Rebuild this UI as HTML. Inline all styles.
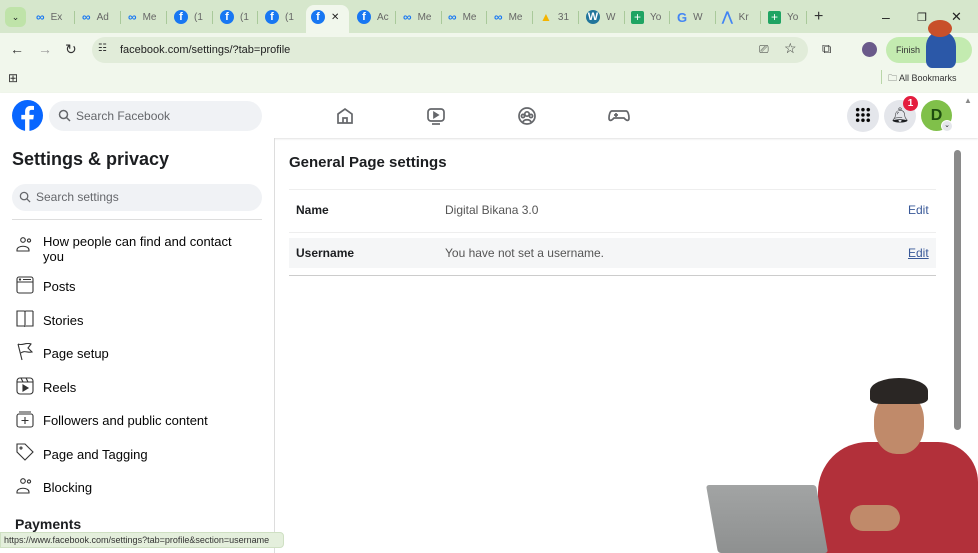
<!DOCTYPE html>
<html><head><meta charset="utf-8"><style>
*{box-sizing:border-box;margin:0;padding:0}
body{width:978px;height:553px;overflow:hidden;position:relative;background:#fff;font-family:"Liberation Sans",sans-serif;color:#1c1e21}
.abs{position:absolute}
.tabs{left:0;top:0;width:978px;height:33px;background:#d6e7cc}
.tab{position:absolute;top:9px;height:16px;font-size:10px;color:#666;display:flex;align-items:center;gap:6px}
.sep{position:absolute;top:11px;width:1px;height:13px;background:#a9c99a}
.ic{width:14px;height:14px;border-radius:50%;background:#1877f2;color:#fff;font-weight:bold;font-size:11px;text-align:center;line-height:15px}
.meta{color:#1877f2;font-weight:bold;font-size:12px}
.toolbar{left:0;top:33px;width:978px;height:60px;background:#f1f7ec}
.url{left:92px;top:37px;width:716px;height:26px;border-radius:13px;background:#e1ecd9;font-size:11px;color:#222;padding-left:28px;line-height:26px}
.fbh{left:0;top:93px;width:978px;height:45px;background:#fff;box-shadow:0 1px 2px rgba(0,0,0,.12)}
.side{left:0;top:138px;width:275px;height:415px;border-right:1px solid #ddd;background:#fff}
.item{position:absolute;left:43px;font-size:13px;color:#050505}
.sic{position:absolute;left:16px;width:18px;height:18px}
</style></head><body>
<div class="abs tabs">
 <div class="abs" style="left:5px;top:7px;width:21px;height:20px;border-radius:6px;background:#bfe3a9;font-size:9px;text-align:center;line-height:20px">&#8964;</div>
 <div class="abs" style="left:306px;top:5px;width:43px;height:28px;background:#f1f7ec;border-radius:8px 8px 0 0"></div>
 <div class="tab" style="left:36px"><span class="meta">∞</span>Ex</div><div class="sep" style="left:74px"></div>
 <div class="tab" style="left:82px"><span class="meta">∞</span>Ad</div><div class="sep" style="left:120px"></div>
 <div class="tab" style="left:128px"><span class="meta">∞</span>Me</div><div class="sep" style="left:166px"></div>
 <div class="tab" style="left:174px"><span class="ic">f</span>(1</div><div class="sep" style="left:212px"></div>
 <div class="tab" style="left:220px"><span class="ic">f</span>(1</div><div class="sep" style="left:257px"></div>
 <div class="tab" style="left:265px"><span class="ic">f</span>(1</div>
 <div class="tab" style="left:311px;color:#222"><span class="ic">f</span>✕</div>
 <div class="tab" style="left:357px"><span class="ic">f</span>Ac</div><div class="sep" style="left:395px"></div>
 <div class="tab" style="left:403px"><span class="meta">∞</span>Me</div><div class="sep" style="left:441px"></div>
 <div class="tab" style="left:448px"><span class="meta">∞</span>Me</div><div class="sep" style="left:486px"></div>
 <div class="tab" style="left:494px"><span class="meta">∞</span>Me</div><div class="sep" style="left:532px"></div>
 <div class="tab" style="left:540px"><span style="color:#f4b400;font-size:12px">▲</span>31</div><div class="sep" style="left:578px"></div>
 <div class="tab" style="left:586px"><span class="ic" style="background:#21759b">W</span>W</div><div class="sep" style="left:624px"></div>
 <div class="tab" style="left:631px"><span style="width:13px;height:13px;background:#1fa463;border-radius:2px;color:#fff;font-size:12px;line-height:12px;text-align:center">+</span>Yo</div><div class="sep" style="left:669px"></div>
 <div class="tab" style="left:677px"><span style="color:#4285f4;font-weight:bold;font-size:13px">G</span>W</div><div class="sep" style="left:715px"></div>
 <div class="tab" style="left:722px"><span style="color:#4285f4;font-weight:bold;font-size:13px">⋀</span>Kr</div><div class="sep" style="left:760px"></div>
 <div class="tab" style="left:768px"><span style="width:13px;height:13px;background:#1fa463;border-radius:2px;color:#fff;font-size:12px;line-height:12px;text-align:center">+</span>Yo</div><div class="sep" style="left:806px"></div>
 <div class="tab" style="left:814px;font-size:16px;color:#333">+</div>
 <div class="tab" style="left:882px;font-size:14px;color:#222">–</div>
 <div class="tab" style="left:917px;font-size:11px;color:#222">❐</div>
 <div class="tab" style="left:951px;font-size:13px;color:#222">✕</div>
</div>
<div class="abs toolbar"></div>
<div class="abs" style="left:10px;top:41px;font-size:14px;color:#333">←</div>
<div class="abs" style="left:38px;top:41px;font-size:14px;color:#999">→</div>
<div class="abs" style="left:65px;top:41px;font-size:14px;color:#333">↻</div>
<div class="abs url">facebook.com/settings/?tab=profile</div>
<div class="abs" style="left:98px;top:43px;font-size:10px;color:#333">☷</div>
<div class="abs" style="left:759px;top:42px;font-size:12px;color:#333">⎚</div>
<div class="abs" style="left:784px;top:40px;font-size:14px;color:#333">☆</div>
<div class="abs" style="left:822px;top:41px;font-size:13px;color:#333">⧉</div>
<div class="abs" style="left:862px;top:42px;width:15px;height:15px;border-radius:50%;background:#6a5a8a"></div>
<div class="abs" style="left:886px;top:37px;width:86px;height:26px;border-radius:13px;background:#c3ebb0;font-size:9px;line-height:26px;padding-left:10px;color:#333">Finish</div>
<div class="abs" style="left:926px;top:32px;width:30px;height:36px;border-radius:40% 40% 20% 20%;background:#2b58a8"></div>
<div class="abs" style="left:928px;top:20px;width:24px;height:17px;border-radius:50%;background:#c8502a"></div>
<div class="abs" style="left:8px;top:71px;font-size:12px;color:#333">⊞</div>
<div class="abs" style="left:881px;top:70px;width:1px;height:14px;background:#b9d6a8"></div>
<div class="abs" style="left:888px;top:71px;font-size:9px;color:#333">🗀 All Bookmarks</div>

<div class="abs fbh"></div>
<svg class="abs" style="left:12px;top:100px" width="31" height="31" viewBox="0 0 32 32"><circle cx="16" cy="16" r="16" fill="#0866ff"/><path d="M18 32V20h4l.6-4.6H18v-3c0-1.3.4-2.2 2.3-2.2h2.4V6.2c-.4-.1-1.8-.2-3.5-.2-3.4 0-5.7 2.1-5.7 5.9v3.5h-3.9V20h3.9v12z" fill="#fff"/></svg>
<div class="abs" style="left:49px;top:101px;width:213px;height:30px;border-radius:15px;background:#f0f2f5;font-size:12px;color:#65676b;line-height:30px;padding-left:27px">Search Facebook</div>
<svg class="abs" style="left:58px;top:109px" width="13" height="13" viewBox="0 0 13 13"><circle cx="5.5" cy="5.5" r="4" fill="none" stroke="#65676b" stroke-width="1.5"/><path d="M8.5 8.5l3.5 3.5" stroke="#65676b" stroke-width="1.5"/></svg>
<svg class="abs" style="left:335px;top:106px" width="20" height="20" viewBox="0 0 20 20" fill="none" stroke="#65676b" stroke-width="1.7"><path d="M3 8l7-5 7 5v9H3z"/><path d="M8 17v-5h4v5"/></svg>
<svg class="abs" style="left:426px;top:106px" width="20" height="20" viewBox="0 0 20 20" fill="none" stroke="#65676b" stroke-width="1.7"><rect x="2" y="3" width="16" height="12" rx="3"/><path d="M8 6.5v5l4-2.5z" fill="#65676b"/><path d="M6 18h8"/></svg>
<svg class="abs" style="left:517px;top:106px" width="20" height="20" viewBox="0 0 20 20" fill="none" stroke="#65676b" stroke-width="1.7"><circle cx="10" cy="10" r="8"/><circle cx="10" cy="8" r="2.2"/><circle cx="6" cy="10" r="1.6"/><circle cx="14" cy="10" r="1.6"/><path d="M6 16c1-3 7-3 8 0"/></svg>
<svg class="abs" style="left:608px;top:106px" width="22" height="20" viewBox="0 0 22 20" fill="none" stroke="#65676b" stroke-width="1.7"><path d="M4 5h14c2 0 3 4 3 7s-2 3-4 1l-1-1H6l-1 1c-2 2-4 2-4-1s1-7 3-7z"/><path d="M6 9h4M8 7v4"/></svg>
<div class="abs" style="left:847px;top:100px;width:32px;height:32px;border-radius:50%;background:#e4e6eb"></div>
<div class="abs" style="left:855px;top:107px;width:16px;height:16px;background:radial-gradient(circle,#050505 1.6px,transparent 2px) 0 0/5.3px 5.3px"></div>
<div class="abs" style="left:884px;top:100px;width:32px;height:32px;border-radius:50%;background:#e4e6eb;text-align:center;line-height:32px;font-size:15px">🔔︎</div>
<div class="abs" style="left:903px;top:96px;width:15px;height:15px;border-radius:50%;background:#e41e3f;color:#fff;font-size:10px;text-align:center;line-height:15px;font-weight:bold">1</div>
<div class="abs" style="left:921px;top:100px;width:31px;height:31px;border-radius:50%;background:#80c04a;color:#1e4d10;font-weight:bold;font-size:16px;text-align:center;line-height:31px">D</div>
<div class="abs" style="left:941px;top:120px;width:12px;height:12px;border-radius:50%;background:#e4e6eb;border:1px solid #fff;font-size:7px;text-align:center;line-height:10px">⌄</div>

<div class="abs side">
 <div class="abs" style="left:12px;top:11px;font-size:18px;font-weight:bold">Settings &amp; privacy</div>
 <div class="abs" style="left:12px;top:46px;width:250px;height:27px;border-radius:14px;background:#f0f2f5;font-size:12px;color:#65676b;line-height:27px;padding-left:24px">Search settings</div>
 <svg class="abs" style="left:19px;top:53px" width="12" height="12" viewBox="0 0 13 13"><circle cx="5.5" cy="5.5" r="4" fill="none" stroke="#65676b" stroke-width="1.4"/><path d="M8.5 8.5l3.5 3.5" stroke="#65676b" stroke-width="1.4"/></svg>
 <div class="abs" style="left:12px;top:81px;width:250px;height:1px;background:#ddd"></div>
 <div class="item" style="top:96px;line-height:15px">How people can find and contact<br>you</div>
 <div class="item" style="top:141px">Posts</div>
 <div class="item" style="top:175px">Stories</div>
 <div class="item" style="top:208px">Page setup</div>
 <div class="item" style="top:242px">Reels</div>
 <div class="item" style="top:275px">Followers and public content</div>
 <div class="item" style="top:309px">Page and Tagging</div>
 <div class="item" style="top:342px">Blocking</div>
 <div class="abs" style="left:15px;top:378px;font-size:14px;font-weight:bold">Payments</div>
 <svg class="sic" style="top:98px" viewBox="0 0 18 18" fill="none" stroke="#333" stroke-width="1.1"><circle cx="7" cy="4" r="2.3"/><circle cx="13" cy="4.5" r="1.6"/><path d="M1 14c0-5 12-5 12 0v1H1z"/></svg>
 <svg class="sic" style="top:138px" viewBox="0 0 18 18" fill="none" stroke="#333" stroke-width="1.1"><rect x="1" y="1" width="16" height="16" rx="2"/><path d="M1 6h16M7 3.5h8"/><circle cx="4" cy="3.5" r=".6" fill="#333"/></svg>
 <svg class="sic" style="top:172px" viewBox="0 0 18 18" fill="none" stroke="#333" stroke-width="1.1"><path d="M1 1h7c1 0 1 1 1 1v15c0-1-1-1-1-1H1zM17 1h-7c-1 0-1 1-1 1M17 1v15h-7"/></svg>
 <svg class="sic" style="top:205px" viewBox="0 0 18 18" fill="none" stroke="#333" stroke-width="1.1"><path d="M2 1l4 16M2 1c4 2 8-2 13 0l-3 4 4 4c-4 1-8-2-11 1"/></svg>
 <svg class="sic" style="top:239px" viewBox="0 0 18 18" fill="none" stroke="#333" stroke-width="1.1"><rect x="1" y="1" width="16" height="16" rx="3"/><path d="M1 5h16M5 1l2 4M10 1l2 4"/><path d="M7 8v6l5-3z" fill="#333"/></svg>
 <svg class="sic" style="top:272px" viewBox="0 0 18 18" fill="none" stroke="#333" stroke-width="1.1"><rect x="1" y="4" width="16" height="13" rx="2"/><path d="M3 2h12M9 7v7M5.5 10.5h7"/></svg>
 <svg class="sic" style="top:305px" viewBox="0 0 18 18" fill="none" stroke="#333" stroke-width="1.1"><path d="M1 1h8l8 8-8 8-8-8z"/><circle cx="5" cy="5" r="1"/></svg>
 <svg class="sic" style="top:339px" viewBox="0 0 18 18" fill="none" stroke="#333" stroke-width="1.1"><circle cx="7" cy="4" r="2.3"/><circle cx="13" cy="4.5" r="1.6"/><path d="M1 15c0-5 12-5 12 0v1H1z"/></svg>
</div>
<div class="abs" style="left:0;top:532px;width:284px;height:16px;background:#e4efdc;border:1px solid #cfe0c3;border-radius:0 4px 4px 0;font-size:9px;color:#333;line-height:14px;padding-left:3px">https://www.facebook.com/settings?tab=profile&amp;section=username</div>

<div class="abs" style="left:289px;top:154px;font-size:15px;font-weight:bold">General Page settings</div>
<div class="abs" style="left:289px;top:189px;width:647px;height:1px;background:#eee"></div>
<div class="abs" style="left:296px;top:203px;font-size:12px;font-weight:bold">Name</div>
<div class="abs" style="left:445px;top:203px;font-size:12px;color:#555">Digital Bikana 3.0</div>
<div class="abs" style="left:908px;top:203px;font-size:12px;color:#385898">Edit</div>
<div class="abs" style="left:289px;top:232px;width:647px;height:1px;background:#eee"></div>
<div class="abs" style="left:289px;top:238px;width:647px;height:30px;background:#f5f6f7"></div>
<div class="abs" style="left:296px;top:246px;font-size:12px;font-weight:bold">Username</div>
<div class="abs" style="left:445px;top:246px;font-size:12px;color:#555">You have not set a username.</div>
<div class="abs" style="left:908px;top:246px;font-size:12px;color:#385898;text-decoration:underline">Edit</div>
<div class="abs" style="left:289px;top:275px;width:647px;height:1px;background:#ccc"></div>
<div class="abs" style="left:954px;top:150px;width:7px;height:280px;border-radius:4px;background:#8a8a8a"></div>
<div class="abs" style="left:964px;top:96px;font-size:8px;color:#888">▲</div>

<!-- presenter -->
<div class="abs" style="left:818px;top:442px;width:160px;height:111px;background:#b2303a;border-radius:50px 40px 0 0"></div>
<div class="abs" style="left:874px;top:392px;width:50px;height:62px;border-radius:45%;background:#c08a6a"></div>
<div class="abs" style="left:870px;top:378px;width:58px;height:26px;border-radius:50% 50% 20% 20%;background:#2a2624"></div>
<div class="abs" style="left:850px;top:505px;width:50px;height:26px;border-radius:13px;background:#c08a6a"></div>
<div class="abs" style="left:712px;top:485px;width:110px;height:68px;background:linear-gradient(#a2a4a4,#8e9090);transform:skewX(10deg);border-radius:3px"></div>
</body></html>
